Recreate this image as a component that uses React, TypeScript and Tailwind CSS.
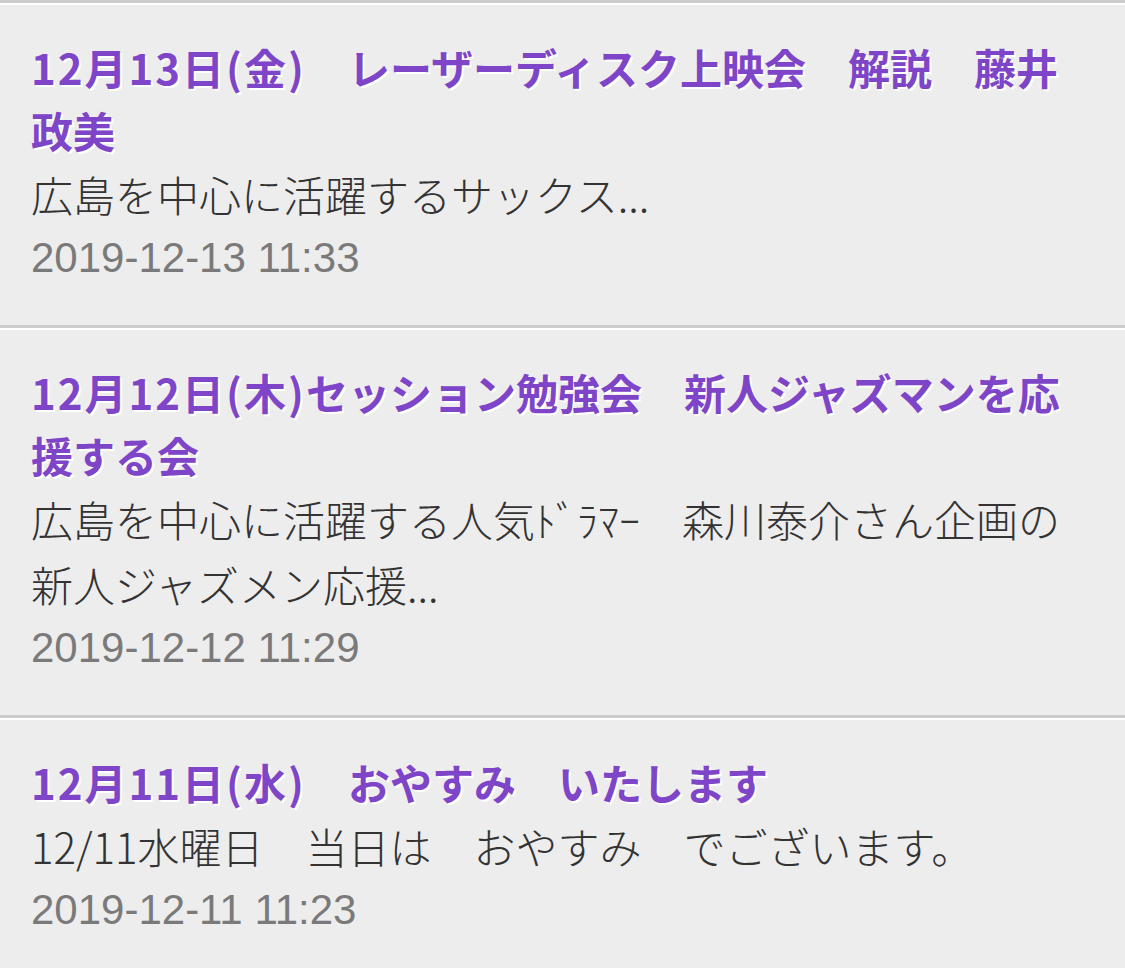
import React from "react";

type Item = { prefix: string; title: string; body: string; date: string };

const items: Item[] = [
  {
    prefix: "12月13日(金)",
    title: "　レーザーディスク上映会　解説　藤井政美",
    body: "広島を中心に活躍するサックス...",
    date: "2019-12-13 11:33",
  },
  {
    prefix: "12月12日(木)",
    title: "セッション勉強会　新人ジャズマンを応援する会",
    body: "広島を中心に活躍する人気ﾄﾞﾗﾏｰ　森川泰介さん企画の新人ジャズメン応援...",
    date: "2019-12-12 11:29",
  },
  {
    prefix: "12月11日(水)",
    title: "　おやすみ　いたします",
    body: "12/11水曜日　当日は　おやすみ　でございます。",
    date: "2019-12-11 11:23",
  },
];

export default function App() {
  return (
    <div className="min-h-[968px] w-[1125px] bg-[#ededed] font-['Noto_Sans_CJK_JP',sans-serif]">
      {items.map((it, i) => (
        <div key={i} className="border-t-[3px] border-[#cccccc]">
          <div className="border-t-2 border-white pl-[31px] pr-[54px] pt-[30px] pb-[35px]">
            <a
              href="#"
              className="block text-[42px] font-bold leading-[63px] text-[#7e45c8] [text-shadow:2px_2px_0_#ffffff] no-underline"
            >
              <span className="tracking-[2px]">{it.prefix}</span>
              {it.title}
            </a>
            <p className="text-[42px] font-light leading-[65px] text-[#333333]">
              {it.body}
            </p>
            <p className="font-['Liberation_Sans',Arial,sans-serif] text-[42px] leading-[64px] text-[#7a7a7a]">
              {it.date}
            </p>
          </div>
        </div>
      ))}
    </div>
  );
}
